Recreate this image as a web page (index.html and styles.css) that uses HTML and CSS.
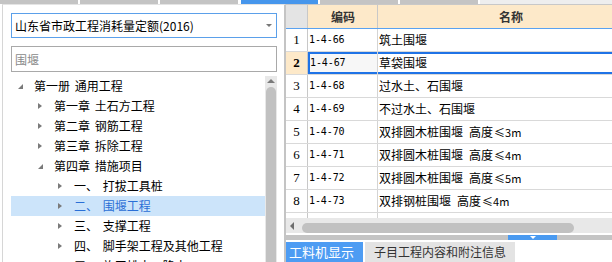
FILE: index.html
```html
<!DOCTYPE html>
<html lang="zh-CN">
<head>
  <meta charset="UTF-8">
  <title>定额查询</title>
  <link rel="stylesheet" href="styles.css">
</head>
<body>
  <div class="topbar">
    <span class="seg"></span>
    <span class="seg"></span>
    <span class="seg"></span>
    <span class="seg seg-active"></span>
    <span class="seg"></span>
    <span class="seg"></span>
    <span class="seg-rest"></span>
  </div>

  <div class="main">
    <div class="left">
      <div class="combo">
        <span>山东省市政工程消耗量定额(2016)</span>
        <span class="caret"></span>
      </div>
      <input class="search" type="text" placeholder="围堰">

      <div class="tree-wrap">
        <ul class="tree">
          <li class="node lv0"><span class="arrow open"></span>第一册 通用工程</li>
          <li class="node lv1"><span class="arrow"></span>第一章 土石方工程</li>
          <li class="node lv1"><span class="arrow"></span>第二章 钢筋工程</li>
          <li class="node lv1"><span class="arrow"></span>第三章 拆除工程</li>
          <li class="node lv1"><span class="arrow open"></span>第四章 措施项目</li>
          <li class="node lv2"><span class="arrow"></span>一、 打拔工具桩</li>
          <li class="node lv2 selected"><span class="arrow"></span>二、 围堰工程</li>
          <li class="node lv2"><span class="arrow"></span>三、 支撑工程</li>
          <li class="node lv2"><span class="arrow"></span>四、 脚手架工程及其他工程</li>
          <li class="node lv2"><span class="arrow"></span>五、 施工排水、降水</li>
        </ul>
        <div class="vscroll">
          <span class="vs-up"></span>
          <span class="vs-thumb"></span>
        </div>
      </div>
    </div>

    <div class="right">
      <div class="grid">
        <div class="row head">
          <div class="c-num"></div>
          <div class="c-code">编码</div>
          <div class="c-name">名称</div>
        </div>
        <div class="row">
          <div class="c-num">1</div>
          <div class="c-code">1-4-66</div>
          <div class="c-name">筑土围堰</div>
        </div>
        <div class="row current">
          <div class="c-num">2</div>
          <div class="c-code">1-4-67</div>
          <div class="c-name">草袋围堰</div>
        </div>
        <div class="row">
          <div class="c-num">3</div>
          <div class="c-code">1-4-68</div>
          <div class="c-name">过水土、石围堰</div>
        </div>
        <div class="row">
          <div class="c-num">4</div>
          <div class="c-code">1-4-69</div>
          <div class="c-name">不过水土、石围堰</div>
        </div>
        <div class="row">
          <div class="c-num">5</div>
          <div class="c-code">1-4-70</div>
          <div class="c-name">双排圆木桩围堰<span class="spec">高度<span class="le">≤3m</span></span></div>
        </div>
        <div class="row">
          <div class="c-num">6</div>
          <div class="c-code">1-4-71</div>
          <div class="c-name">双排圆木桩围堰<span class="spec">高度<span class="le">≤4m</span></span></div>
        </div>
        <div class="row">
          <div class="c-num">7</div>
          <div class="c-code">1-4-72</div>
          <div class="c-name">双排圆木桩围堰<span class="spec">高度<span class="le">≤5m</span></span></div>
        </div>
        <div class="row">
          <div class="c-num">8</div>
          <div class="c-code">1-4-73</div>
          <div class="c-name">双排钢桩围堰<span class="spec">高度<span class="le">≤4m</span></span></div>
        </div>
        <div class="row">
          <div class="c-num">9</div>
          <div class="c-code">1-4-74</div>
          <div class="c-name">双排钢板桩围堰<span class="spec">高度<span class="le">≤6m</span></span></div>
        </div>
      </div>

      <div class="hscroll">
        <span class="hs-left"></span>
        <span class="hs-thumb"></span>
      </div>

      <div class="splitter">
        <span class="split-btn"></span>
      </div>

      <div class="tabs">
        <span class="tab tab-active">工料机显示</span>
        <span class="tab">子目工程内容和附注信息</span>
      </div>
    </div>
  </div>
</body>
</html>
```

FILE: styles.css
```css
* {
  box-sizing: border-box;
}

body {
  margin: 0;
  width: 612px;
  height: 262px;
  overflow: hidden;
  background: #ffffff;
  color: #000000;
  font-family: "Noto Sans CJK SC", "Noto Sans", sans-serif;
  font-size: 12px;
}

/* top tab strip */
.topbar {
  display: flex;
  gap: 2px;
  height: 4px;
}

.seg {
  width: 78px;
  background: #c4c4c4;
}

.seg-active {
  width: 77px;
  margin-left: 1px;
  background: #4696ec;
}

.seg-rest {
  flex: 1;
  background: #eeeeee;
}

.main {
  display: flex;
  height: 258px;
}

/* left panel */
.left {
  width: 284px;
  margin-left: 2px;
  border-left: 1px solid #d6d6d6;
  border-right: 2px solid #c4c4c4;
  border-top: 1px solid #e4e4e4;
  padding: 8px 0 0 8px;
  display: flex;
  flex-direction: column;
}

.combo {
  position: relative;
  width: 266px;
  height: 25px;
  border: 1px solid #5ba0ea;
  padding-left: 3px;
  line-height: 23px;
}

.caret {
  position: absolute;
  right: 4px;
  top: 10px;
  border-left: 3px solid transparent;
  border-right: 3px solid transparent;
  border-top: 3px solid #777777;
}

.search {
  width: 266px;
  height: 26px;
  margin: 8px 0 0 0;
  border: 1px solid #a9a9a9;
  padding: 0 3px;
  font-family: inherit;
  font-size: 12px;
  outline: none;
}

.search::placeholder {
  color: #8a8a8a;
}

.tree-wrap {
  display: flex;
  width: 266px;
  margin-top: 4px;
  flex: 1;
  overflow: hidden;
}

.tree {
  list-style: none;
  margin: 0;
  padding: 0;
  width: 254px;
  word-spacing: 2px;
}

.node {
  display: flex;
  align-items: center;
  height: 20px;
  line-height: 20px;
  white-space: pre;
}

.lv0 { padding-left: 7px; }
.lv1 { padding-left: 27px; }
.lv2 { padding-left: 47px; }

.node.selected {
  background: #cce4fa;
  color: #2a6fd6;
}

.arrow {
  width: 16px;
  height: 20px;
  position: relative;
  flex-shrink: 0;
}

.arrow::before {
  content: "";
  position: absolute;
  left: 0;
  top: 7px;
  border-top: 3px solid transparent;
  border-bottom: 3px solid transparent;
  border-left: 4px solid #7a7a7a;
}

.arrow.open::before {
  top: 8px;
  border-top: 5px solid transparent;
  border-bottom: 0;
  border-left: 0;
  border-right: 5px solid #7a7a7a;
}

.vscroll {
  width: 12px;
  background: #e8e8e8;
  display: flex;
  flex-direction: column;
  align-items: center;
}

.vs-up {
  margin-top: 3px;
  border-left: 4px solid transparent;
  border-right: 4px solid transparent;
  border-bottom: 4px solid #7a7a7a;
}

.vs-thumb {
  width: 10px;
  flex: 1;
  margin-top: 4px;
  border-radius: 5px 5px 0 0;
  background: #c1c1c1;
}

/* right panel */
.right {
  flex: 1;
  display: flex;
  flex-direction: column;
  border-top: 1px solid #c8c8c8;
  overflow: hidden;
}

.grid {
  height: 213px;
  overflow: hidden;
}

.row {
  display: flex;
  height: 23px;
  border-bottom: 1px solid #d9d9d9;
  line-height: 22px;
  white-space: nowrap;
}

.c-num {
  width: 22px;
  flex-shrink: 0;
  border-right: 1px solid #c8c8c8;
  text-align: center;
  font-family: "Liberation Serif", serif;
  font-size: 13px;
}

.c-code {
  width: 70px;
  flex-shrink: 0;
  border-right: 1px solid #d4d4d4;
  padding-left: 1px;
  font-family: "DejaVu Sans Mono", monospace;
  font-size: 10px;
  letter-spacing: -0.1px;
}

.c-name {
  width: 266px;
  flex-shrink: 0;
  padding-left: 1px;
}

.spec {
  margin-left: 6px;
}

.le {
  font-size: 11px;
  margin-left: 1px;
}

.row.head {
  height: 24px;
  line-height: 23px;
  border-bottom: 1px solid #5aa2f0;
  font-weight: bold;
  color: #333333;
}

.row.head .c-num {
  background: #e4e4e4;
}

.row.head .c-code,
.row.head .c-name {
  background: #fde9c9;
  text-align: center;
  font-family: "Noto Sans CJK SC", sans-serif;
  font-size: 12px;
  letter-spacing: 0;
  border-right: 1px solid #c8c8c8;
}

.row.current .c-num {
  background: #fde9c9;
  font-weight: bold;
}

.row.current .c-code {
  background: #f7f7f7;
  box-shadow: inset 2px 0 #1f73e6, inset 0 2px #1f73e6, inset 0 -2px #1f73e6;
  padding-left: 2px;
}

.row.current .c-name {
  flex: 1;
  box-shadow: inset 0 2px #1f73e6, inset 0 -2px #1f73e6;
}

.hscroll {
  height: 15px;
  background: #e8e8e8;
  display: flex;
  align-items: center;
  padding-left: 4px;
}

.hs-left {
  border-top: 4px solid transparent;
  border-bottom: 4px solid transparent;
  border-right: 4px solid #6e6e6e;
}

.hs-thumb {
  width: 272px;
  height: 10px;
  margin: 5px 0 0 8px;
  border-radius: 5px;
  background: #c1c1c1;
}

.splitter {
  height: 5px;
  margin-top: 2px;
  background: #c4c4c4;
  padding-left: 222px;
}

.split-btn {
  display: flex;
  justify-content: center;
  width: 49px;
  height: 5px;
  background: #4a9af0;
}

.split-btn::after {
  content: "";
  margin-top: 1px;
  border-left: 3px solid transparent;
  border-right: 3px solid transparent;
  border-top: 3px solid #ffffff;
}

.tabs {
  display: flex;
  gap: 2px;
  margin-top: 2px;
  height: 20px;
}

.tab {
  background: #e3e3e3;
  color: #333333;
  line-height: 20px;
  padding: 0 9px;
  width: 150px;
}

.tab-active {
  width: 77px;
  padding: 0 3px;
  background: #4d9cf3;
  color: #ffffff;
  font-size: 13px;
}
```
